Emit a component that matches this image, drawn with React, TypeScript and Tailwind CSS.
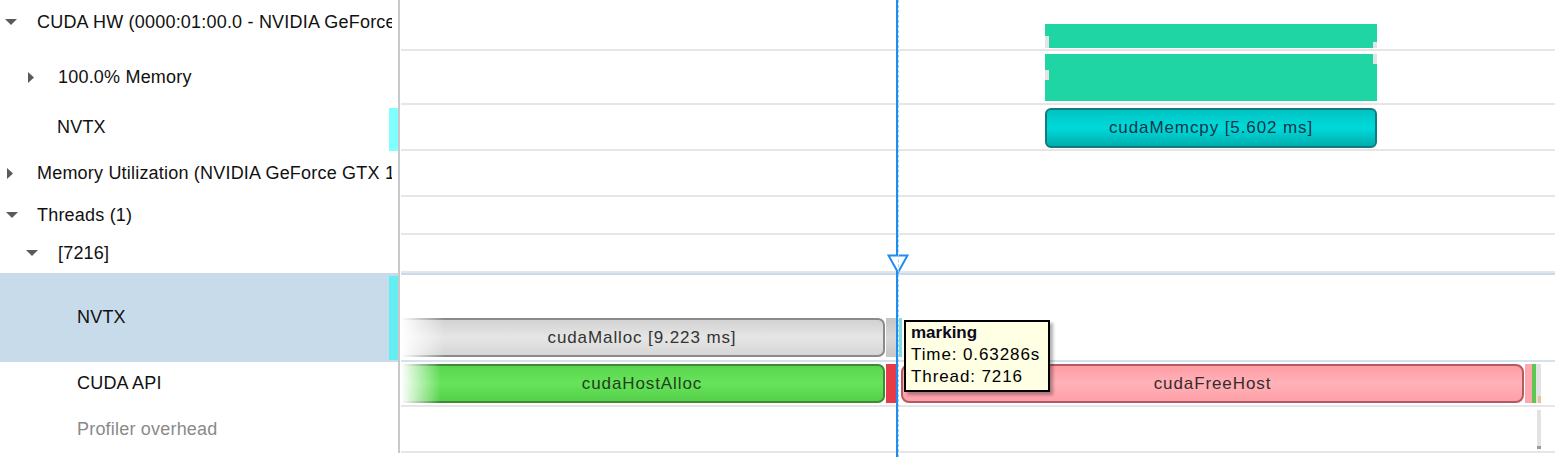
import React from "react";

type Toggle = "down" | "right" | null;

const Down = () => (
  <svg width="12" height="6" viewBox="0 0 12 6" className="block">
    <polygon points="0,0 12,0 6,6" fill="#5a5a5a" />
  </svg>
);

const Right = () => (
  <svg width="6" height="11" viewBox="0 0 6 11" className="block">
    <polygon points="0,0 6,5.5 0,11" fill="#5a5a5a" />
  </svg>
);

function Row({
  h,
  pad,
  slot,
  toggle,
  label,
  muted,
  marker,
  selected,
  track = "",
  children,
}: {
  h: string;
  pad: string;
  slot?: string;
  toggle?: Toggle;
  label: string;
  muted?: boolean;
  marker?: string;
  selected?: boolean;
  track?: string;
  children?: React.ReactNode;
}) {
  return (
    <div className={`flex ${h} ${selected ? "bg-[#c8dbea]" : ""}`}>
      <div className="relative flex w-[398px]">
        <div className={`flex w-[392px] items-center overflow-hidden whitespace-nowrap ${pad}`}>
          {toggle && (
            <div className={`flex shrink-0 items-center ${slot}`}>
              {toggle === "down" ? <Down /> : <Right />}
            </div>
          )}
          <span
            className={`text-[18px] tracking-[0.2px] ${muted ? "text-[#8a8a8a]" : "text-[#111]"}`}
          >
            {label}
          </span>
        </div>
        {marker && <div className={`absolute right-0 w-[9px] ${marker}`} />}
      </div>
      <div className="w-[2px] bg-[#c9c9c9]" />
      <div className="w-px bg-white" />
      <div className="flex flex-1 flex-col bg-white">
        {selected && <div className="h-[2px] bg-[#c8dbea]" />}
        <div className={`flex flex-1 items-start ${track}`}>{children}</div>
        <div className={`h-[2px] ${selected ? "bg-[#d2e2ef]" : "bg-[#e6e6e6]"}`} />
      </div>
    </div>
  );
}

const barText = "relative text-[17px] tracking-[0.9px] whitespace-nowrap";
const fade = "absolute -bottom-[2px] -top-[2px] left-0 bg-linear-to-r from-white to-transparent";

export default function App() {
  return (
    <div className="relative h-[457px] w-[1555px] overflow-hidden bg-white font-['Liberation_Sans',Arial,sans-serif]">
      <Row h="h-[51px]" pad="pl-[5px] pb-[7px]" slot="w-[32px]" toggle="down" label="CUDA HW (0000:01:00.0 - NVIDIA GeForce GTX 1050)" track="pl-[644px] pt-[24px]">
        <div className="flex h-[24px] w-[332px] items-end justify-between bg-[#1ed5a3]">
          <div className="h-[12px] w-[4px] bg-[#e4e4e4]" />
          <div className="h-[6px] w-[4px] bg-[#e4e4e4]" />
        </div>
      </Row>

      <Row h="h-[54px]" pad="pl-[28px] pb-[2px]" slot="w-[30px]" toggle="right" label="100.0% Memory" track="pl-[644px] pt-[3px]">
        <div className="flex h-[47px] w-[332px] items-start justify-between bg-[#1ed5a3]">
          <div className="mt-[16px] h-[10px] w-[4px] bg-[#e4e4e4]" />
          <div className="h-[10px] w-[4px] bg-[#e4e4e4]" />
        </div>
      </Row>

      <Row h="h-[46px]" pad="pl-[57px] pb-[2px]" label="NVTX" marker="top-[3px] bottom-0 bg-[#80ffff]" track="pl-[644px] pt-[3px]">
        <div className="flex h-[40px] w-[332px] items-center justify-center rounded-[6px] border-2 border-[#137a7e] bg-linear-to-b from-[#00c3c3] via-[#00dada] to-[#00aeae]">
          <span className={`${barText} text-[#173449]`}>cudaMemcpy [5.602 ms]</span>
        </div>
      </Row>

      <Row h="h-[46px]" pad="pl-[7px] pb-[2px]" slot="w-[30px]" toggle="right" label="Memory Utilization (NVIDIA GeForce GTX 1050)" />

      <Row h="h-[38px]" pad="pl-[6px] pb-[2px]" slot="w-[31px]" toggle="down" label="Threads (1)" />

      <Row h="h-[38px]" pad="pl-[26px] pb-[2px]" slot="w-[32px]" toggle="down" label="[7216]" />

      <Row h="h-[89px]" pad="pl-[77px]" label="NVTX" selected marker="top-[3px] bottom-[2px] bg-[#64eef2]" track="gap-px pt-[43px]">
        <div className="relative flex h-[39px] w-[484px] items-center justify-center rounded-r-[7px] border-y-2 border-r-2 border-[#8a8a8a] bg-linear-to-b from-[#d2d2d2] via-[#e6e6e6] to-[#d6d6d6]">
          <div className={`${fade} w-[44px]`} />
          <span className={`${barText} text-[#333]`}>cudaMalloc [9.223 ms]</span>
        </div>
        <div className="h-[39px] w-[11px] bg-linear-to-b from-[#c4c4c4] via-[#d8d8d8] to-[#c6c6c6]" />
        <div className="ml-[1px] h-[39px] w-[3px] bg-[#7adede]" />
      </Row>

      <Row h="h-[45px]" pad="pl-[77px] pb-[2px]" label="CUDA API" track="pt-[2px]">
        <div className="relative flex h-[39px] w-[484px] items-center justify-center rounded-r-[7px] border-y-2 border-r-2 border-[#3e8a36] bg-linear-to-b from-[#5ad64e] via-[#66e45a] to-[#56cf4a]">
          <div className={`${fade} w-[40px]`} />
          <span className={`${barText} text-[#234020]`}>cudaHostAlloc</span>
        </div>
        <div className="ml-px h-[39px] w-[11px] bg-[#e63a48]" />
        <div className="ml-[4px] flex h-[39px] w-[623px] items-center justify-center rounded-[8px] border-2 border-[#b25b65] bg-linear-to-b from-[#ff9ca5] via-[#ffb2b8] to-[#ff9fa8]">
          <span className={`${barText} text-[#3a2a2c]`}>cudaFreeHost</span>
        </div>
        <div className="ml-px h-[39px] w-[7px] bg-[#ffa6ae]" />
        <div className="h-[39px] w-[4px] bg-[#5cc852]" />
        <div className="flex h-[39px] w-[5px] items-end justify-end bg-[#e2e2e2]">
          <div className="h-[7px] w-[3px] bg-[#e6c690]" />
        </div>
      </Row>

      <Row h="h-[46px]" pad="pl-[77px] pb-[2px]" label="Profiler overhead" muted track="pl-[1136px] pt-[3px]">
        <div className="flex h-[39px] w-[4px] items-end bg-[#e2e2e2]">
          <div className="h-[3px] w-[4px] bg-[#9a9a9a]" />
        </div>
      </Row>

      {/* time cursor */}
      <div className="absolute left-[896px] top-0 h-full w-[2px] bg-[#1e8cf0]" />
      <svg width="22" height="20" viewBox="0 0 22 20" className="absolute left-[887px] top-[254px]">
        <polygon points="1.5,1.5 20.5,1.5 11,18.5" fill="white" stroke="#1e8cf0" strokeWidth="2" />
      </svg>
      <div className="absolute left-[898px] top-0 h-full border-l border-dashed border-[#9fd6e6]" />

      {/* tooltip */}
      <div className="absolute left-[904px] top-[320px] w-[146px] border-2 border-black bg-[#ffffe4] pb-[2px] pl-[5px] text-[17px] leading-[22px] tracking-[0.9px] text-black shadow-[3px_3px_3px_rgba(0,0,0,0.3)]">
        <div className="font-bold tracking-normal text-[#0a0a20]">marking</div>
        <div>Time: 0.63286s</div>
        <div>Thread: 7216</div>
      </div>
    </div>
  );
}
